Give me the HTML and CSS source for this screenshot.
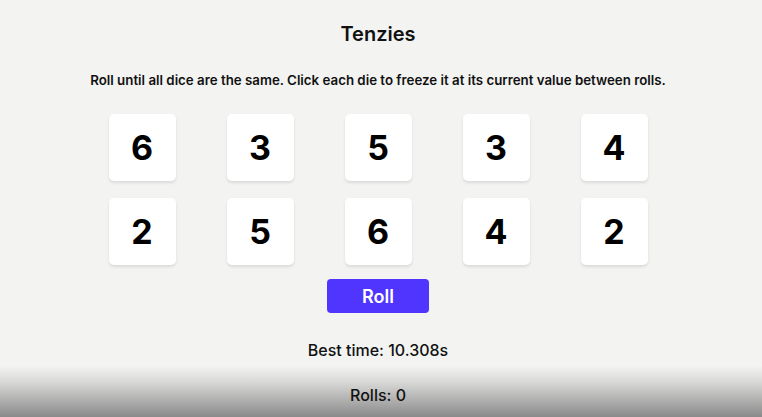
FILE: index.html
```html
<!DOCTYPE html>
<html lang="en">
<head>
<meta charset="utf-8">
<title>Tenzies</title>
<link rel="stylesheet" href="styles.css">
</head>
<body>
<main class="app">
  <h1 class="title">Tenzies</h1>
  <p class="instructions">Roll until all dice are the same. Click each die to freeze it at its current value between rolls.</p>
  <div class="dice">
    <button class="die">6</button>
    <button class="die">3</button>
    <button class="die">5</button>
    <button class="die">3</button>
    <button class="die">4</button>
    <button class="die">2</button>
    <button class="die">5</button>
    <button class="die">6</button>
    <button class="die">4</button>
    <button class="die">2</button>
  </div>
  <button class="roll">Roll</button>
  <p class="stat best">Best time: 10.308s</p>
  <p class="stat rolls">Rolls: 0</p>
</main>
</body>
</html>
```
FILE: styles.css
```css
html, body {
  margin: 0;
  padding: 0;
  height: 100%;
}
body {
  font-family: Inter, "Noto Sans", "DejaVu Sans", sans-serif;
  color: #111;
  background: linear-gradient(to bottom, #f3f4f2 0, #f3f4f2 366px, #d8d8d7 382px, #8a8a8a 417px);
  overflow: hidden;
}
.app {
  display: flex;
  flex-direction: column;
  align-items: center;
  padding: 20px 6px 0 0;
}
.title {
  margin: 0;
  font-size: 20px;
  line-height: 28px;
  font-weight: 600;
}
.instructions {
  margin: 22px 0 0;
  font-size: 13.3px;
  line-height: 20px;
  font-weight: 600;
}
.dice {
  margin-top: 24px;
  display: grid;
  grid-template-columns: repeat(5, 67px);
  grid-auto-rows: 67px;
  column-gap: 51px;
  row-gap: 17px;
}
.die {
  border: none;
  background: #fff;
  border-radius: 5px;
  box-shadow: 0 2px 3px rgba(0, 0, 0, 0.1);
  font-family: inherit;
  font-size: 34px;
  font-weight: 700;
  color: #000;
  padding: 0;
}
.roll {
  margin-top: 14px;
  width: 102px;
  height: 34px;
  border: none;
  border-radius: 4px;
  background: #5035ff;
  color: #fff;
  font-family: inherit;
  font-size: 18px;
  font-weight: 600;
  padding: 0;
}
.stat {
  margin: 0;
  font-size: 16px;
  line-height: 20px;
  font-weight: 500;
}
.best {
  margin-top: 27px;
}
.rolls {
  margin-top: 25px;
}
```
